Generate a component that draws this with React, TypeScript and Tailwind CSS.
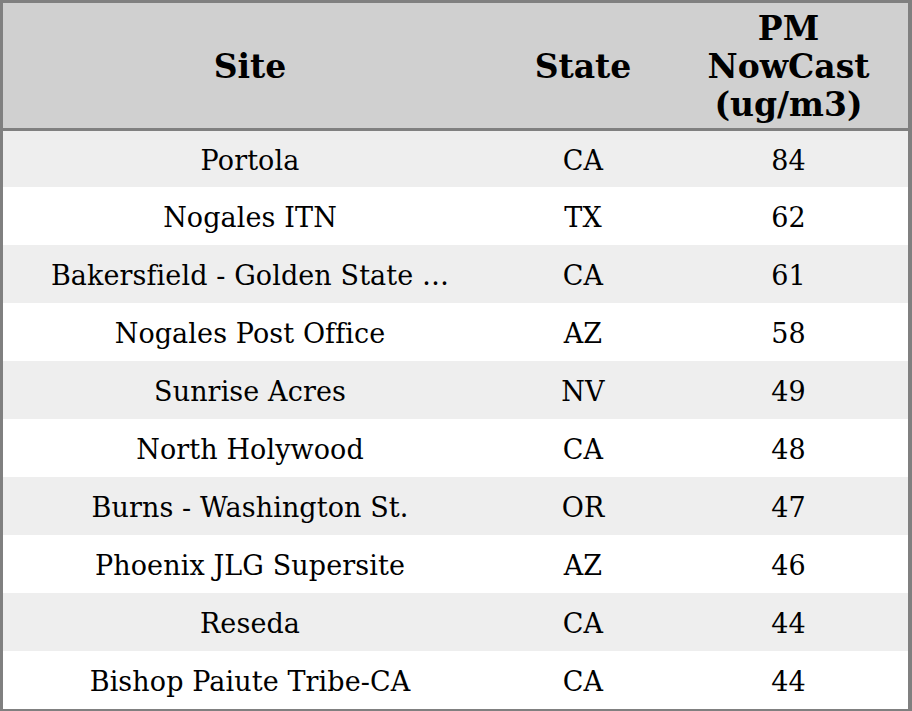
const ROWS: { site: string; state: string; pm: number }[] = [
  { site: 'Portola', state: 'CA', pm: 84 },
  { site: 'Nogales ITN', state: 'TX', pm: 62 },
  { site: 'Bakersfield - Golden State …', state: 'CA', pm: 61 },
  { site: 'Nogales Post Office', state: 'AZ', pm: 58 },
  { site: 'Sunrise Acres', state: 'NV', pm: 49 },
  { site: 'North Holywood', state: 'CA', pm: 48 },
  { site: 'Burns - Washington St.', state: 'OR', pm: 47 },
  { site: 'Phoenix JLG Supersite', state: 'AZ', pm: 46 },
  { site: 'Reseda', state: 'CA', pm: 44 },
  { site: 'Bishop Paiute Tribe-CA', state: 'CA', pm: 44 },
];

const COLS = 'grid grid-cols-[494px_172px_239px]';

export default function App() {
  return (
    <div
      className="w-[912px] h-[711px] overflow-hidden bg-white text-black"
      style={{ fontFamily: '"DejaVu Serif", "Liberation Serif", serif' }}
    >
      <div className="w-[912px] border-[3px] border-[#808080] border-r-4">
        <div className={`${COLS} h-[128px] bg-[#d0d0d0] border-b-[3px] border-[#808080] text-[33px] font-bold leading-[38px] text-center items-center`}>
          <div className="pt-0.5">Site</div>
          <div className="pt-0.5">State</div>
          <div className="pt-0.5">
            PM
            <br />
            NowCast
            <br />
            (ug/m3)
          </div>
        </div>
        {ROWS.map((r, i) => (
          <div
            key={i}
            className={`${COLS} ${i === 0 ? 'h-[56px]' : 'h-[58px]'} ${i % 2 === 0 ? 'bg-[#eeeeee]' : 'bg-white'} pt-1 text-[27px] tracking-[0.1px] text-center items-center`}
          >
            <div className="whitespace-nowrap">{r.site}</div>
            <div>{r.state}</div>
            <div>{r.pm}</div>
          </div>
        ))}
      </div>
    </div>
  );
}
